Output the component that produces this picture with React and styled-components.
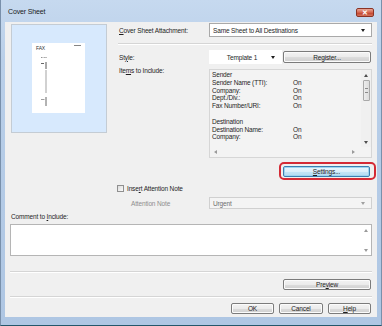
import styled, { createGlobalStyle } from "styled-components";

//CSS
const GlobalStyle = createGlobalStyle`
  html, body {
    margin: 0;
    padding: 0;
  }
  body {
    width: 382px;
    height: 326px;
    overflow: hidden;
    font-family: "Liberation Sans", Arial, sans-serif;
    font-size: 6.5px;
    letter-spacing: -0.15px;
    color: #1e1e1e;
  }
`;

const Window = styled.div`
  width: 382px;
  height: 326px;
  box-sizing: border-box;
  display: flex;
  flex-direction: column;
  padding: 0 4px 8px 4px;
  background: linear-gradient(#c6d9ef, #b9cfe9 60px, #aec6e3);
  border-left: 1px solid #7990ab;
  border-right: 1px solid #7990ab;
  border-bottom: 1px solid #23566a;
`;

const TitleBar = styled.div`
  height: 22px;
  flex-shrink: 0;
  display: flex;
  align-items: center;
  justify-content: space-between;
  padding: 0 3px 0 3px;
`;

const Title = styled.span`
  font-size: 7px;
  color: #1a1a1a;
  margin-top: 1px;
`;

const CloseButton = styled.div`
  width: 18px;
  height: 9px;
  margin-top: 3px;
  box-sizing: border-box;
  display: flex;
  align-items: center;
  justify-content: center;
  border: 1px solid #8b3324;
  border-radius: 2px;
  background: linear-gradient(#e8a899, #d4634c 50%, #c2402a 51%, #d2735c);
  color: #fff;
  font-size: 7px;
  font-weight: bold;
  line-height: 1;
`;

const Client = styled.div`
  flex: 1;
  display: flex;
  flex-direction: column;
  padding: 0 5px;
  background: #f0f0f0;
  border: none;
`;

const Top = styled.div`
  display: flex;
  align-items: flex-start;
  margin-top: 1px;
`;

const PreviewPanel = styled.div`
  width: 96px;
  height: 109px;
  box-sizing: border-box;
  margin: 1px 0 0 1px;
  padding: 18px 0 0 20px;
  background: #d7e9fd;
  border: 1px solid #c4ccd4;
`;

const Page = styled.div`
  width: 53px;
  height: 70px;
  background: #ffffff;
`;

const Form = styled.div`
  margin-left: 11px;
  display: grid;
  grid-template-columns: 91px 163px;
  align-items: center;
`;

const Label = styled.div`
  padding-left: ${(p) => p.$indent || 1}px;
  color: ${(p) => (p.$disabled ? "#8e8e8e" : "#1e1e1e")};
  align-self: ${(p) => (p.$top ? "start" : "center")};
  padding-top: ${(p) => (p.$top ? 3 : 0)}px;
`;

const Separator = styled.div`
  grid-column: 1 / span 2;
  height: 1px;
  background: #d5d5d5;
  border-bottom: 1px solid #ffffff;
  margin: ${(p) => p.$m || "6px 0 5px 0"};
`;

const Select = styled.div`
  height: ${(p) => p.$h || 14}px;
  width: ${(p) => (p.$w ? p.$w + "px" : "auto")};
  box-sizing: border-box;
  display: flex;
  align-items: center;
  justify-content: space-between;
  padding: 0 6px 0 3px;
  background: ${(p) => (p.$disabled ? "#f4f4f4" : "#ffffff")};
  border: 1px solid
    ${(p) => (p.$flat ? "#ffffff" : p.$disabled ? "#d0d0d0" : "#a9a9a9")};
  color: ${(p) => (p.$disabled ? "#6d6d6d" : "#1e1e1e")};
`;

const SelectText = styled.span`
  flex: 1;
  text-align: ${(p) => (p.$center ? "center" : "left")};
`;

const Arrow = styled.span`
  width: 0;
  height: 0;
  flex-shrink: 0;
  border-left: ${(p) => (p.$dir === "left" ? "0" : "2.5px solid transparent")};
  border-right: ${(p) => (p.$dir === "right" ? "0" : "2.5px solid transparent")};
  ${(p) =>
    p.$dir === "up" &&
    `border-bottom: 3px solid ${p.$color || "#4d4d4d"}; border-left-width: 2.5px; border-right-width: 2.5px;`}
  ${(p) =>
    (!p.$dir || p.$dir === "down") &&
    `border-top: 3px solid ${p.$color || "#1e1e1e"};`}
  ${(p) =>
    p.$dir === "left" &&
    `border-top: 2.5px solid transparent; border-bottom: 2.5px solid transparent; border-right: 3px solid ${p.$color || "#9a9a9a"};`}
  ${(p) =>
    p.$dir === "right" &&
    `border-top: 2.5px solid transparent; border-bottom: 2.5px solid transparent; border-left: 3px solid ${p.$color || "#9a9a9a"};`}
`;

const Pair = styled.div`
  display: flex;
  gap: 1px;
  height: 14px;
  align-items: center;
`;

const Button = styled.button`
  width: ${(p) => p.$w}px;
  height: ${(p) => p.$h || 12}px;
  box-sizing: border-box;
  padding: 0;
  font: inherit;
  letter-spacing: inherit;
  color: #1e1e1e;
  border: 1px solid ${(p) => (p.$focus ? "#3c7fb1" : "#7b7b7b")};
  border-radius: 2px;
  background: ${(p) =>
    p.$focus
      ? "linear-gradient(#e9f5fc, #dbeffb 50%, #c4e5f8 51%, #b5dcf3)"
      : "linear-gradient(#f3f3f3, #ebebeb 50%, #dddddd 51%, #cfcfcf)"};
  box-shadow: inset 0 0 0 1px ${(p) => (p.$focus ? "#9fd4f0" : "#fbfbfb")};
`;

const RowRight = styled.div`
  grid-column: 2;
  display: flex;
  justify-content: flex-end;
  padding-right: ${(p) => p.$pr || 2}px;
  margin-top: ${(p) => p.$mt || 0}px;
`;

const Highlight = styled.div`
  position: relative;
  &::after {
    content: "";
    position: absolute;
    inset: -4px -6px -3px -4px;
    border: 2px solid #d42a35;
    border-radius: 5px;
  }
`;

const ListBox = styled.div`
  margin-top: 5px;
  height: 89px;
  box-sizing: border-box;
  display: grid;
  grid-template-columns: 1fr 10px;
  grid-template-rows: 1fr 10px;
  background: #f3f3f3;
  border: 1px solid #d6d6d6;
`;

const ListContent = styled.div`
  padding: 1px 0 0 2px;
  overflow: hidden;
`;

const ListRow = styled.div`
  display: flex;
  height: 7.8px;
  line-height: 7.8px;
  white-space: nowrap;
`;

const ListKey = styled.span`
  width: 81px;
`;

const VScroll = styled.div`
  display: flex;
  flex-direction: column;
  align-items: center;
  padding: 4px 0 3px;
  background: #f0f0f0;
`;

const Thumb = styled.div`
  width: 7px;
  height: 21px;
  margin-top: 3px;
  box-sizing: border-box;
  border: 1px solid #a9a9a9;
  border-radius: 1px;
  background: linear-gradient(90deg, #ececec, #dcdcdc);
  display: flex;
  align-items: center;
  justify-content: center;
  &::after {
    content: "";
    width: 3px;
    height: 3px;
    border-top: 1px solid #8a8a8a;
    border-bottom: 1px solid #8a8a8a;
  }
`;

const Spacer = styled.div`
  flex: 1;
`;

const HScroll = styled.div`
  display: flex;
  align-items: center;
  justify-content: space-between;
  padding: 0 6px 0 4px;
`;

const CheckRow = styled.div`
  grid-column: 1 / span 2;
  display: flex;
  align-items: center;
  gap: 3px;
  height: 8px;
  margin-top: 7px;
  margin-left: -1px;
`;

const CheckBox = styled.span`
  width: 7px;
  height: 7px;
  box-sizing: border-box;
  border: 1px solid #8f8f8f;
  background: linear-gradient(135deg, #dcdcdc, #fbfbfb);
`;

const AttentionRow = styled.div`
  grid-column: 1 / span 2;
  display: grid;
  grid-template-columns: 91px 163px;
  align-items: center;
  margin-top: 5px;
`;

const CommentLabel = styled.div`
  margin-top: 4px;
  height: 7px;
  line-height: 7px;
  padding-left: 1px;
`;

const TextArea = styled.div`
  margin-top: 4px;
  height: 32px;
  box-sizing: border-box;
  display: flex;
  justify-content: flex-end;
  background: #ffffff;
  border: 1px solid #b5b5b5;
`;

const TextScroll = styled.div`
  width: 10px;
  display: flex;
  flex-direction: column;
  align-items: center;
  justify-content: space-between;
  padding: 4px 0 3px;
`;

const Line = styled.div`
  height: 1px;
  background: #d5d5d5;
  border-bottom: 1px solid #ffffff;
  margin: ${(p) => p.$m};
`;

const Footer = styled.div`
  display: flex;
  justify-content: flex-end;
  gap: ${(p) => p.$gap || 5}px;
  padding-right: 1px;
  margin-top: ${(p) => p.$mt}px;
`;

//DATA
const items = [
  ["Sender", ""],
  ["Sender Name (TTI):", "On"],
  ["Company:", "On"],
  ["Dept./Div.:", "On"],
  ["Fax Number/URI:", "On"],
  ["", ""],
  ["Destination", ""],
  ["Destination Name:", "On"],
  ["Company:", "On"],
];

//PREVIEW DRAWING
const FaxThumb = () => (
  <svg width="53" height="70" viewBox="0 0 53 70">
    <text
      x="4"
      y="7"
      fontFamily="Liberation Sans, Arial, sans-serif"
      fontSize="5"
      fill="#333"
    >
      FAX
    </text>
    <line x1="42" y1="2.5" x2="49" y2="2.5" stroke="#666" strokeWidth="0.8" />
    <line x1="9" y1="14.5" x2="10.5" y2="14.5" stroke="#666" strokeWidth="0.7" />
    <line x1="11.5" y1="14.5" x2="13" y2="14.5" stroke="#888" strokeWidth="0.7" />
    <line x1="14" y1="14" x2="14" y2="15" stroke="#555" strokeWidth="0.8" />
    <line x1="9" y1="20.5" x2="12" y2="20.5" stroke="#555" strokeWidth="0.9" />
    <line x1="14" y1="19" x2="14" y2="26" stroke="#555" strokeWidth="1" />
    <line x1="14" y1="27" x2="14" y2="50" stroke="#999" strokeWidth="0.9" />
    <line x1="9" y1="56.5" x2="12.5" y2="56.5" stroke="#888" strokeWidth="0.8" />
    <line x1="14" y1="54" x2="14" y2="63" stroke="#666" strokeWidth="1" />
  </svg>
);

//PAGE COVER SHEET
const App = () => {
  return (
    <>
      <GlobalStyle />
      <Window>
        <TitleBar>
          <Title>Cover Sheet</Title>
          <CloseButton>✕</CloseButton>
        </TitleBar>
        <Client>
          <Top>
            <PreviewPanel>
              <Page>
                <FaxThumb />
              </Page>
            </PreviewPanel>
            <Form>
              <Label>
                <u>C</u>over Sheet Attachment:
              </Label>
              <Select>
                <SelectText>Same Sheet to All Destinations</SelectText>
                <Arrow />
              </Select>
              <Separator />
              <Label>
                St<u>y</u>le:
              </Label>
              <Pair>
                <Select $w={73} $flat>
                  <SelectText $center>Template 1</SelectText>
                  <Arrow />
                </Select>
                <Button $w={88}>
                  Re<u>g</u>ister...
                </Button>
              </Pair>
              <Label $top>
                Ite<u>m</u>s to Include:
              </Label>
              <ListBox>
                <ListContent>
                  {items.map(([k, v], i) => (
                    <ListRow key={i}>
                      <ListKey>{k}</ListKey>
                      <span>{v}</span>
                    </ListRow>
                  ))}
                </ListContent>
                <VScroll>
                  <Arrow $dir="up" />
                  <Thumb />
                  <Spacer />
                  <Arrow $color="#4d4d4d" />
                </VScroll>
                <HScroll>
                  <Arrow $dir="left" />
                  <Arrow $dir="right" />
                </HScroll>
                <div />
              </ListBox>
              <RowRight $mt={8} $pr={2}>
                <Highlight>
                  <Button $w={87} $h={11} $focus>
                    <u>S</u>ettings...
                  </Button>
                </Highlight>
              </RowRight>
              <CheckRow>
                <CheckBox />
                <span>
                  Inse<u>r</u>t Attention Note
                </span>
              </CheckRow>
              <AttentionRow>
                <Label $indent={13} $disabled>
                  Attention Note
                </Label>
                <Select $h={12} $disabled>
                  <SelectText>Urgent</SelectText>
                  <Arrow $color="#a0a0a0" />
                </Select>
              </AttentionRow>
            </Form>
          </Top>
          <CommentLabel>
            Comment to <u>I</u>nclude:
          </CommentLabel>
          <TextArea>
            <TextScroll>
              <Arrow $dir="up" $color="#9a9a9a" />
              <Arrow $color="#9a9a9a" />
            </TextScroll>
          </TextArea>
          <Line $m="15px 0 0 0" />
          <Footer $mt={6}>
            <Button $w={88} $h={11}>
              Pre<u>v</u>iew
            </Button>
          </Footer>
          <Line $m="6px 0 0 0" />
          <Footer $mt={5} $gap={5}>
            <Button $w={43} $h={11}>
              OK
            </Button>
            <Button $w={44} $h={11}>
              Cancel
            </Button>
            <Button $w={43} $h={11}>
              <u>H</u>elp
            </Button>
          </Footer>
        </Client>
      </Window>
    </>
  );
};
//EXPORT
export default App;
